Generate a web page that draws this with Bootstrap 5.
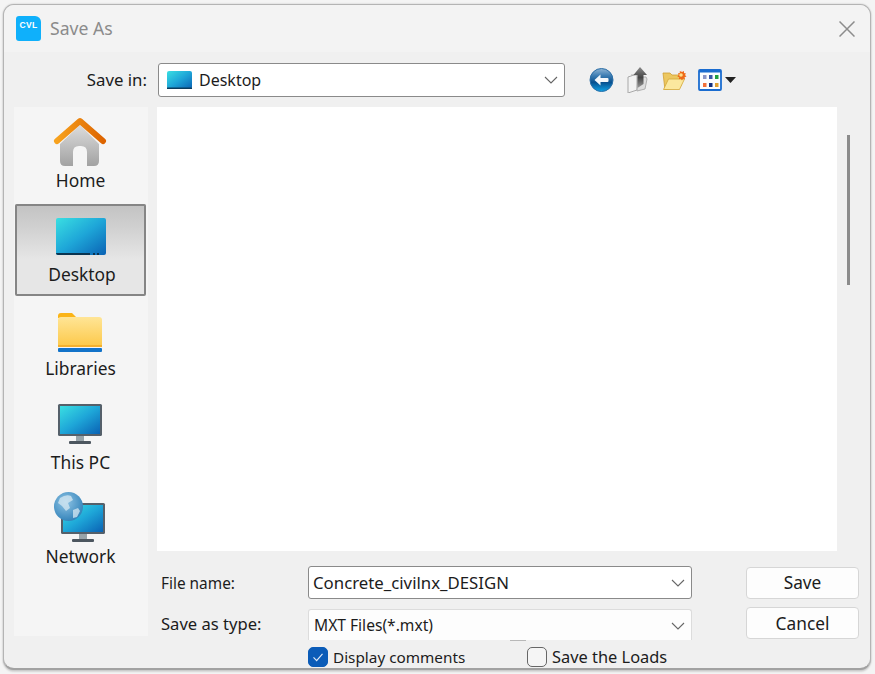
<!DOCTYPE html>
<html lang="en">
<head>
<meta charset="UTF-8">
<meta name="viewport" content="width=device-width, initial-scale=1.0">
<title>Save As</title>
<link href="https://cdn.jsdelivr.net/npm/bootstrap@5.3.0/dist/css/bootstrap.min.css" rel="stylesheet">
<style>
html, body { height: 674px; overflow: hidden; }
body { background: #f4f4f4; font-family: "Noto Sans", "Open Sans", sans-serif; font-size: 16px; color: #1c1c1c; }
.dlg-window { width: 868px; height: 666px; margin: 4px 0 0 3px; background: #f0f0f0; border: 1px solid #b4b4b4; border-bottom: 2px solid #a2a2a2; border-radius: 11px; overflow: hidden; box-shadow: 0 0 2px rgba(0,0,0,.22), 0 2px 2px rgba(0,0,0,.12); }
.dlg-title { height: 47px; padding: 0 15px 0 12px; background: #f3f3f3; }
.app-logo { width: 25px; height: 25px; background: #0fb0fb; border-radius: 3px 6px 3px 3px; color: #fff; font: bold 8.500px/19px "Liberation Sans", sans-serif; text-align: center; letter-spacing: .4px; }
.dlg-caption { margin-left: 9px; font-size: 17.600px; color: #8b8b8b; }
.toolbar-row { height: 34px; margin-top: 11px; }
.field-label { width: 143px; text-align: right; margin-right: 11px; font-size: 16.800px; }
.combo-box { height: 34px; padding: 0 6px 0 8px; background: #fff; border: 1px solid #8a8a8a; border-radius: 3px; }
.combo-wide { width: 407px; }
.combo-icon { margin-right: 7px; }
.tool-icons { margin-left: 24px; }
.tool-up { margin-left: 13px; }
.tool-new { margin-left: 14px; }
.tool-view { margin-left: 11px; }
.tool-caret { margin-left: 3px; }
.main-row { margin-top: 10px; height: 529px; }
.places-bar { width: 134px; margin-left: 10px; margin-right: 9px; padding-top: 3px; background: #f5f5f5; }
.place-item { height: 94px; margin-left: 1px; width: 131px; padding-top: 4px; line-height: 20px; font-size: 17.400px; }
.place-item svg { display: block; flex: none; }
.place-active { height: 92px; margin-bottom: 2px; border-radius: 2px; background: linear-gradient(#c2c2c2, #d0d0d0 25%, #e6e6e6 60%); box-shadow: inset 0 0 0 2px #858585; }
.place-active span { margin-left: 3px; }
.file-area { width: 680px; height: 444px; background: #fff; }
.scroll-thumb { width: 3px; height: 150px; margin: 28px 0 0 10px; background: #8b8b8b; }
.form-area { margin-top: 15px; width: 702px; }
.form-line { height: 33px; }
.form-line + .form-line { height: 31px; margin-top: 10px; position: relative; }
.form-label-cell { width: 151px; padding: 2px 0 0 4px; font-size: 15.400px; }
.type-label { font-size: 16.600px; padding-top: 0; }
.file-combo { width: 384px; height: 33px; padding: 0 6px 0 4px; font-size: 16.800px; }
.type-combo { height: 31px; padding: 2px 6px 0 5px; border-color: #dcdcdc; border-bottom: 0; border-radius: 3px 3px 0 0; background: #fdfdfd; font-size: 15.600px; }
.dlg-btn { width: 113px; height: 32px; padding: 0; margin-left: 54px; background: #fdfdfd; border: 1px solid #d6d6d6; border-radius: 4px; color: #1c1c1c; font-size: 17.300px; line-height: 1; }
.btn-shifted { margin-bottom: 4px; padding-top: 2px; }
.combo-tick { position: absolute; left: 353px; bottom: -1px; width: 16px; height: 1px; background: #b8b8b8; }
.check-row { margin: 9px 0 0 304px; height: 23px; }
.check-row .form-check { margin: 0; padding: 0; min-height: 0; }
.check-row .form-check-input { float: none; width: 20px; height: 20px; margin: 0 5px 0 0; border: 1px solid #666; border-radius: 5px; background-color: #f5f5f5; }
.check-row .form-check-input:checked { background-color: #0b5cb8; border-color: #0b5cb8; background-image: url("data:image/svg+xml,%3csvg xmlns='http://www.w3.org/2000/svg' viewBox='0 0 20 20'%3e%3cpath fill='none' stroke='%23dfeaf7' stroke-width='1.300' d='M5 10.500l3.500 3.500 6.500-7.500'/%3e%3c/svg%3e"); }
.check-row .form-check-label { line-height: 20px; }
.check-first { width: 219px; font-size: 15.300px; }
.check-second { font-size: 16.400px; }
</style>
</head>
<body>
<div class="dlg-window d-flex flex-column">

    <!-- title bar -->
    <div class="dlg-title d-flex align-items-center flex-shrink-0">
        <div class="app-logo">CVL</div>
        <span class="dlg-caption">Save As</span>
        <svg class="ms-auto" width="16" height="16" viewBox="0 0 16 16"><path d="M.5.5l15 15M15.500.5l-15 15" stroke="#8c8c8c" stroke-width="1.5" fill="none"/></svg>
    </div>

    <svg width="0" height="0" class="position-absolute">
        <defs>
            <linearGradient id="screenGrad" x1="0" y1="0" x2="1" y2="1"><stop offset="0" stop-color="#3adfe2"/><stop offset=".5" stop-color="#1ea6d8"/><stop offset="1" stop-color="#0a62b4"/></linearGradient>
            <linearGradient id="houseGrad" x1="0" y1="0" x2="0" y2="1"><stop offset="0" stop-color="#dcdcdc"/><stop offset="1" stop-color="#a2a2a2"/></linearGradient>
            <linearGradient id="roofGrad" x1="0" y1="0" x2="1" y2="0"><stop offset="0" stop-color="#f7a21e"/><stop offset="1" stop-color="#dd6400"/></linearGradient>
            <linearGradient id="folderGrad" x1="0" y1="0" x2="0" y2="1"><stop offset="0" stop-color="#ffe596"/><stop offset="1" stop-color="#fcc848"/></linearGradient>
            <linearGradient id="backGrad" x1="0" y1="0" x2="0" y2="1"><stop offset="0" stop-color="#8fb4d4"/><stop offset=".3" stop-color="#3f7fb4"/><stop offset=".6" stop-color="#07508f"/><stop offset="1" stop-color="#0fa2e6"/></linearGradient>
            <linearGradient id="arrowGrad" x1="0" y1="0" x2="0" y2="1"><stop offset="0" stop-color="#8a8a8a"/><stop offset=".5" stop-color="#454545"/><stop offset="1" stop-color="#9a9a9a"/></linearGradient>
            <radialGradient id="globeGrad" cx=".4" cy=".35" r=".7"><stop offset="0" stop-color="#8fc4e4"/><stop offset="1" stop-color="#2f80b8"/></radialGradient>
        </defs>
    </svg>

    <!-- save in row -->
    <div class="toolbar-row d-flex align-items-center flex-shrink-0">
        <label class="field-label">Save in:</label>
        <div class="combo-box combo-wide d-flex align-items-center">
            <svg class="combo-icon" width="25" height="20" viewBox="0 0 25 20"><rect x="0" y="1" width="25" height="18" rx="2" fill="url(#screenGrad)"/><rect x="0" y="17.500" width="25" height="1.500" fill="#0a3c5e"/></svg>
            <span>Desktop</span>
            <svg class="ms-auto" width="14" height="8" viewBox="0 0 14 8"><path d="M1 1l6 6 6-6" stroke="#666" stroke-width="1.100" fill="none"/></svg>
        </div>
        <div class="tool-icons d-flex align-items-center">
            <svg width="25" height="26" viewBox="0 0 25 26"><circle cx="12.500" cy="13" r="11.500" fill="url(#backGrad)" stroke="#2c6ea6"/><path d="M5.500 13l6-5.500v3.500h7q1 0 1 1v2q0 1-1 1h-7v3.500z" fill="#f4f8fb"/></svg>
            <svg class="tool-up" width="21" height="26" viewBox="0 0 21 26"><path d="M1 10l9-3v16l-9 3z" fill="#f2f2f2" stroke="#a8a8a8"/><path d="M4 8h7M11 10h8l1 2-2 10-8 2z" fill="#dedede" stroke="#b0b0b0"/><path d="M13 0l7 8h-3.500v9l-6 4V8H6.500z" fill="url(#arrowGrad)"/></svg>
            <svg class="tool-new" width="25" height="20" viewBox="0 0 25 20"><path d="M1 3h7l2 2h9v11l-16 4z" fill="#ecc760" stroke="#cfa033" stroke-width=".8"/><path d="M1.500 19.500l5-10.500h16l-5 10.500z" fill="#fbe89e" stroke="#d4a838" stroke-width=".8"/><path d="M19 0l1 2 2-1v2l2 .5-1 1.500 1.500 1.500-2 .8.500 2-2-.5-1 1.700-1.200-1.700-2 .5.500-2-2-.8 1.500-1.500-1-1.500 2-.5v-2l2 1z" fill="#ee6a18"/><circle cx="19" cy="5" r="1.800" fill="#ffe08a"/></svg>
            <svg class="tool-view" width="24" height="22" viewBox="0 0 24 22"><rect x="1" y="1" width="22" height="20" rx="1" fill="#fbfdff" stroke="#1a6cd0" stroke-width="1.800"/><rect x="1" y="1" width="22" height="2.500" fill="#1a6cd0"/><rect x="5" y="6" width="3.500" height="4" fill="#8a96c8"/><rect x="11" y="6" width="3.500" height="4" fill="#3a58a8"/><rect x="17" y="6" width="3.500" height="4" fill="#20a040"/><rect x="5" y="14" width="3.500" height="4" fill="#f0703a"/><rect x="11" y="14" width="3.500" height="4" fill="#14307e"/><rect x="17" y="14" width="3.500" height="4" fill="#e0a030"/></svg>
            <svg class="tool-caret" width="11" height="6" viewBox="0 0 11 6"><path d="M0 0h11L5.500 6z" fill="#222"/></svg>
        </div>
    </div>

    <!-- places bar + file list + form -->
    <div class="main-row d-flex flex-shrink-0">
        <div class="places-bar flex-shrink-0">
            <div class="place-item d-flex flex-column align-items-center">
                <svg width="60" height="56" viewBox="51 114 60 56"><path d="M60 144l20-19 19 19v17q0 5-5 5h-7v-14q0-6-6-6h-2q-6 0-6 6v14h-8q-5 0-5-5z" fill="url(#houseGrad)"/><path d="M57 141l23-20 23 20" fill="none" stroke="url(#roofGrad)" stroke-width="6" stroke-linecap="round" stroke-linejoin="round"/></svg>
                <span>Home</span>
            </div>
            <div class="place-item place-active d-flex flex-column align-items-center">
                <svg width="60" height="56" viewBox="51 208 60 56"><rect x="56" y="218" width="50" height="37" rx="2" fill="url(#screenGrad)"/><path d="M56 253h34v2H58q-2 0-2-2z" fill="#0a3450"/><rect x="93" y="253" width="2" height="2" fill="#0a3450"/><rect x="97" y="253" width="2" height="2" fill="#0a3450"/></svg>
                <span>Desktop</span>
            </div>
            <div class="place-item d-flex flex-column align-items-center">
                <svg width="60" height="56" viewBox="51 302 60 56"><path d="M58 316q0-3 3-3h11l5 5h-19z" fill="#fbb417"/><path d="M58 320q0-3 3-3h38q3 0 3 3v27H58z" fill="url(#folderGrad)"/><rect x="58" y="345" width="44" height="2" fill="#f3b02e"/><rect x="58" y="348" width="44" height="4" rx="1" fill="#1273c9"/></svg>
                <span>Libraries</span>
            </div>
            <div class="place-item d-flex flex-column align-items-center">
                <svg width="60" height="56" viewBox="51 396 60 56"><rect x="58" y="404" width="44" height="32" rx="1.500" fill="#55606a"/><rect x="60" y="406" width="40" height="28" fill="url(#screenGrad)"/><rect x="76" y="436" width="8" height="6" fill="#98a4aa"/><rect x="69" y="441" width="22" height="3" rx="1" fill="#4c565f"/></svg>
                <span>This PC</span>
            </div>
            <div class="place-item d-flex flex-column align-items-center">
                <svg width="60" height="56" viewBox="51 490 60 56"><rect x="61" y="503" width="44" height="31" rx="1.500" fill="#55606a"/><rect x="63" y="505" width="40" height="27" fill="url(#screenGrad)"/><rect x="79" y="534" width="8" height="6" fill="#98a4aa"/><rect x="72" y="539" width="22" height="3" rx="1" fill="#4c565f"/><circle cx="68.500" cy="506.500" r="14.500" fill="url(#globeGrad)"/><path d="M60 498q6-4 11-2l2 4-5 3 2 5-4 3-4-5-4-3zM73 510l5-2 2 3-3 6-4 1z" fill="#d7e8f2" opacity=".75"/></svg>
                <span>Network</span>
            </div>
        </div>

        <div class="flex-grow-1">
            <div class="d-flex">
                <div class="file-area"></div>
                <div class="scroll-thumb"></div>
            </div>
            <div class="form-area">
                <div class="form-line d-flex align-items-center">
                    <div class="form-label-cell">File name:</div>
                    <div class="combo-box file-combo d-flex align-items-center">
                        <span>Concrete_civilnx_DESIGN</span>
                        <svg class="ms-auto" width="14" height="8" viewBox="0 0 14 8"><path d="M1 1l6 6 6-6" stroke="#666" stroke-width="1.100" fill="none"/></svg>
                    </div>
                    <button type="button" class="btn dlg-btn">Save</button>
                </div>
                <div class="form-line d-flex align-items-center">
                    <div class="form-label-cell type-label">Save as type:</div>
                    <div class="combo-box file-combo type-combo d-flex align-items-center">
                        <span>MXT Files(*.mxt)</span>
                        <svg class="ms-auto" width="14" height="8" viewBox="0 0 14 8"><path d="M1 1l6 6 6-6" stroke="#666" stroke-width="1.100" fill="none"/></svg>
                    </div>
                    <button type="button" class="btn dlg-btn btn-shifted">Cancel</button>
                    <span class="combo-tick"></span>
                </div>
            </div>
        </div>
    </div>

    <!-- option checkboxes -->
    <div class="check-row d-flex align-items-center flex-shrink-0">
        <div class="form-check check-first d-flex align-items-center">
            <input class="form-check-input" type="checkbox" id="chkComments" checked>
            <label class="form-check-label" for="chkComments">Display comments</label>
        </div>
        <div class="form-check check-second d-flex align-items-center">
            <input class="form-check-input" type="checkbox" id="chkLoads">
            <label class="form-check-label" for="chkLoads">Save the Loads</label>
        </div>
    </div>
</div>
<script src="https://cdn.jsdelivr.net/npm/bootstrap@5.3.0/dist/js/bootstrap.bundle.min.js"></script>
</body>
</html>
